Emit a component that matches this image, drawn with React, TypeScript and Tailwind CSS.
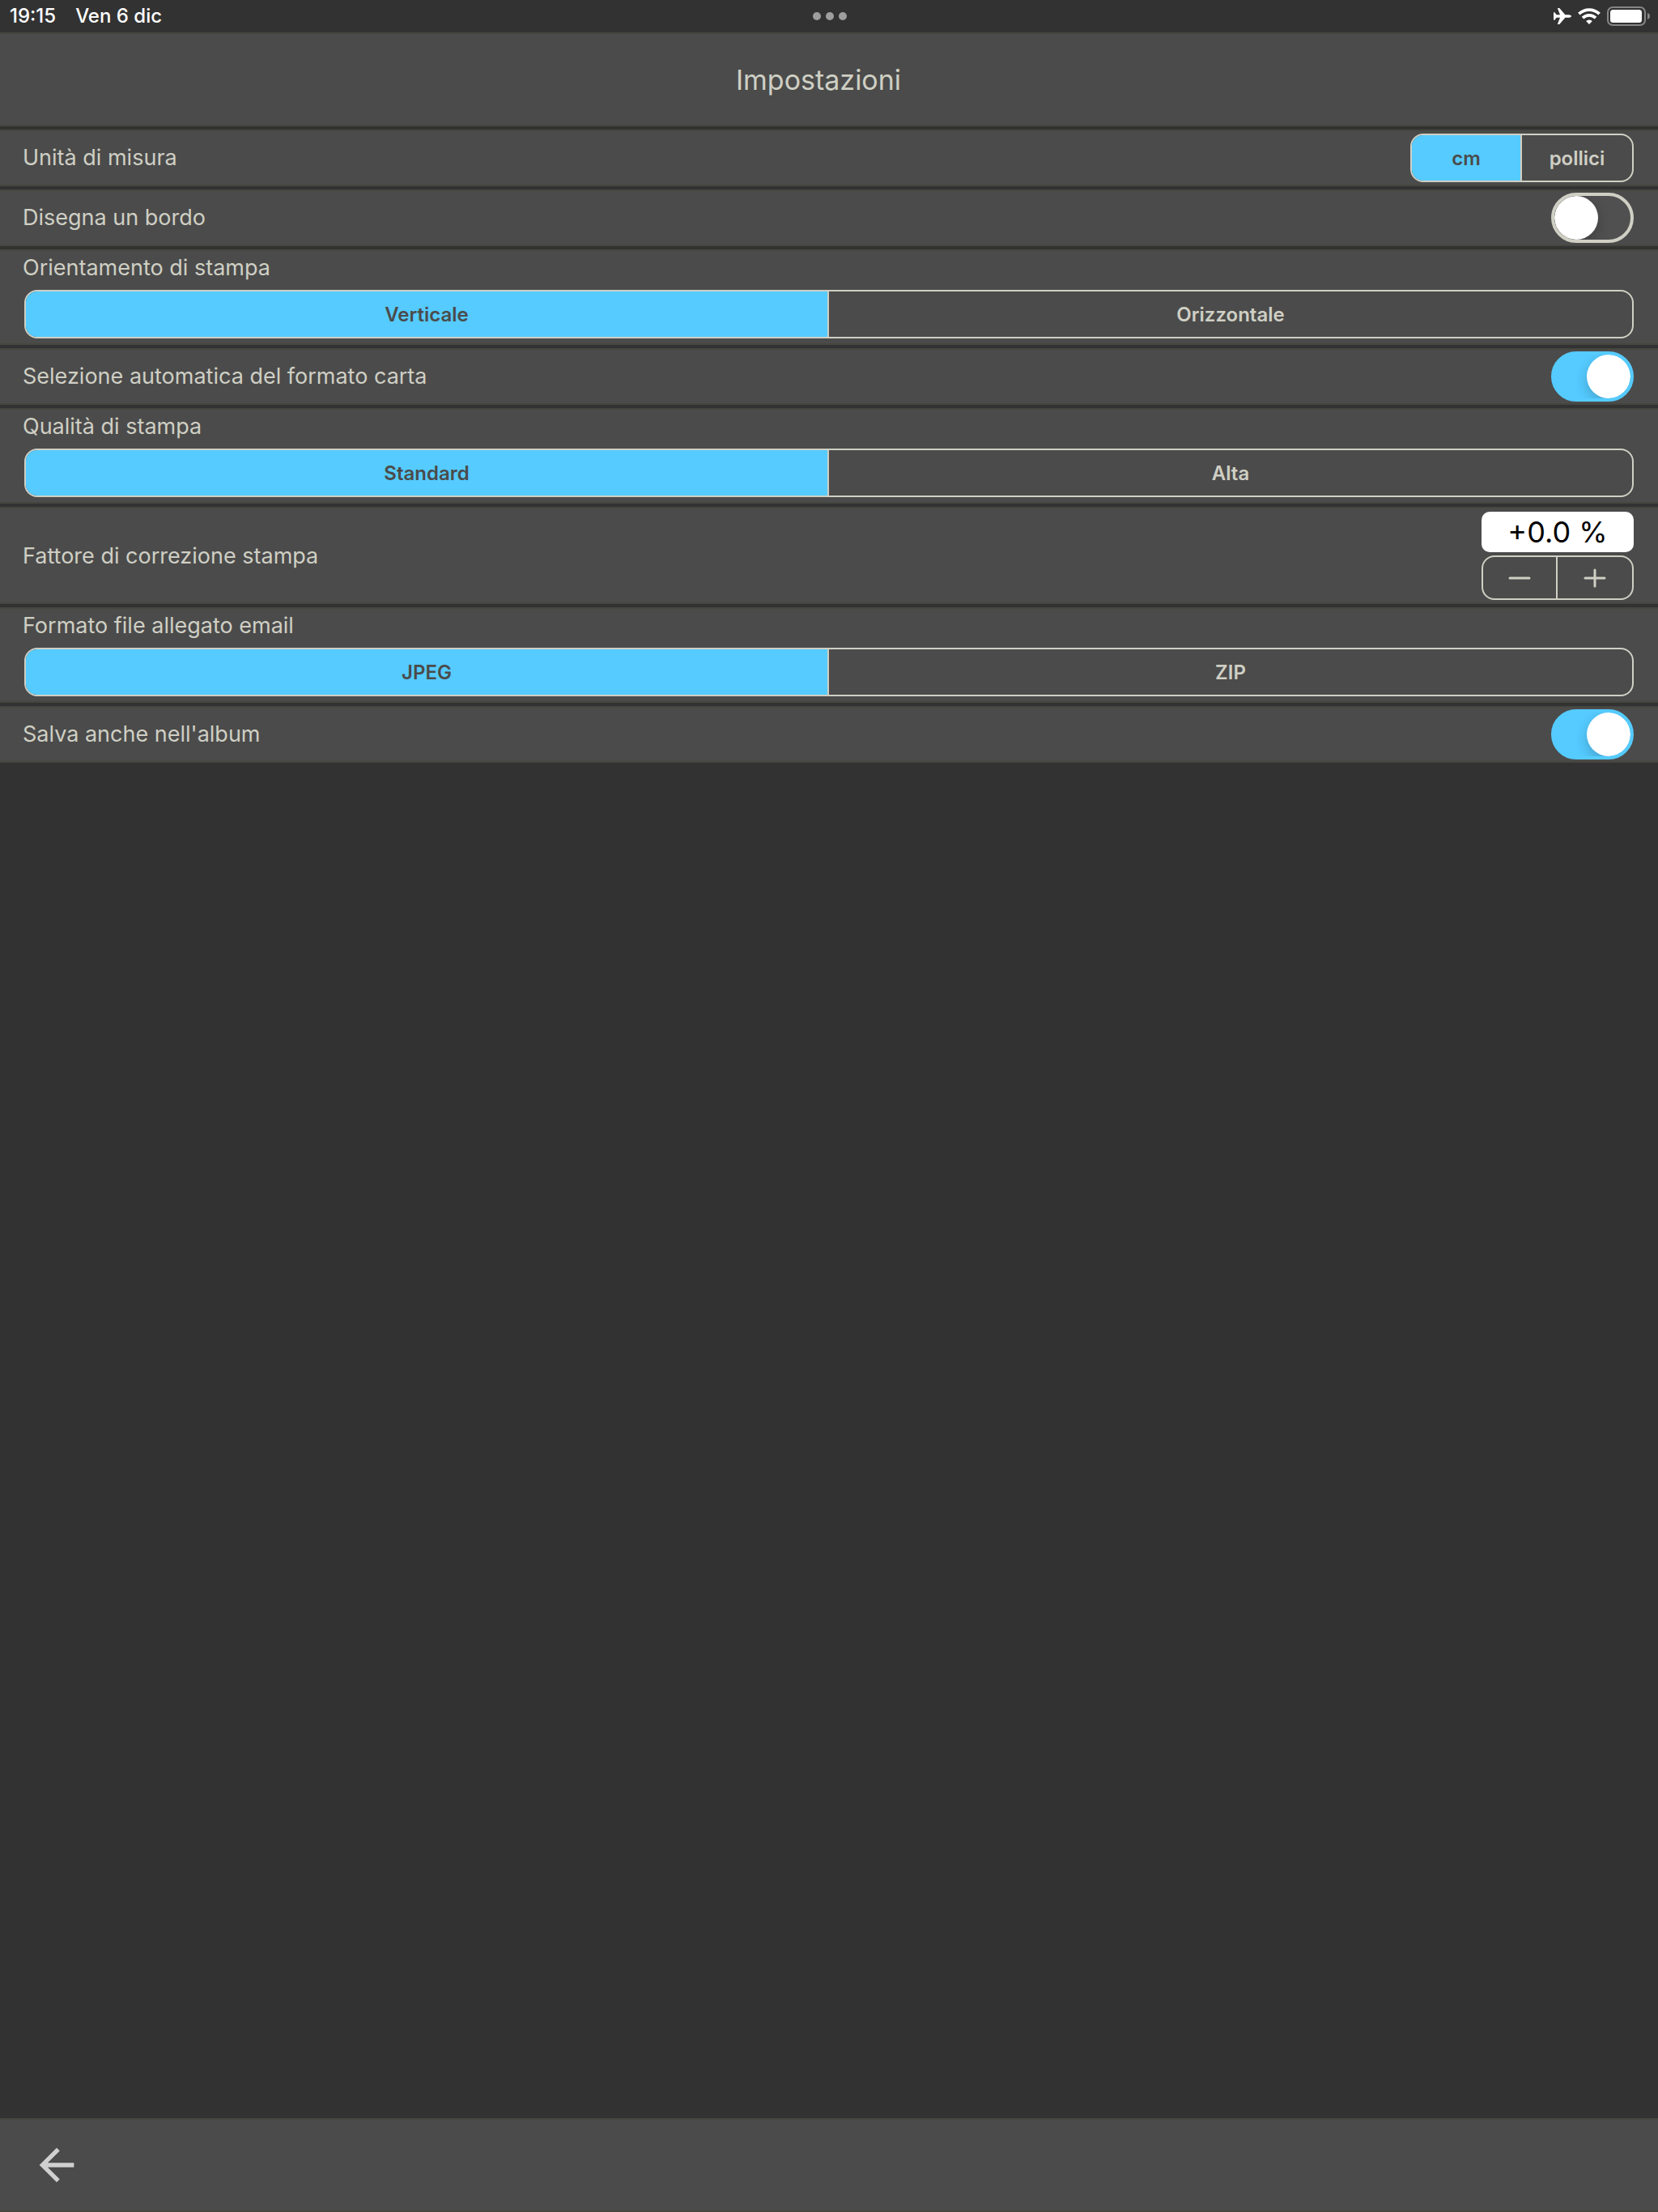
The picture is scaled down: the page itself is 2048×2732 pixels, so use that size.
import { useState } from 'react'
import { MdArrowBack } from 'react-icons/md'

const ROW = 'border-y-2 border-[#464640] bg-[#4b4b4b]'
const LABEL = 'text-[27px] leading-[42px]'

function StatusBar() {
    return (
        <div className="flex h-10 items-center justify-between pl-3 pr-[10px] text-white">
            <div className="flex flex-1 items-center gap-6 text-2xl leading-8 font-medium">
                <span>19:15</span>
                <span>Ven 6 dic</span>
            </div>
            <div className="flex gap-[6px]">
                <span className="size-[10px] rounded-full bg-[#9e9e9e]" />
                <span className="size-[10px] rounded-full bg-[#9e9e9e]" />
                <span className="size-[10px] rounded-full bg-[#9e9e9e]" />
            </div>
            <div className="flex flex-1 items-center justify-end gap-2">
                <svg width="22" height="20" viewBox="0 0 22 20" fill="currentColor">
                    <path d="M22 10c0-1.1-1.8-1.8-3.4-1.8h-4.2L7.7.5C7.4.1 7 0 6.6 0H5.4c-.3 0-.5.3-.4.6l3 7.6H3.6L1.8 5.7C1.6 5.4 1.4 5.3 1 5.3H.5c-.3 0-.5.2-.5.5v8.4c0 .3.2.5.5.5H1c.4 0 .6-.1.8-.4l1.8-2.5H8l-3 7.6c-.1.3.1.6.4.6h1.2c.4 0 .8-.1 1.1-.5l6.7-7.7h4.2c1.6 0 3.4-.7 3.4-1.8z" />
                </svg>
                <svg width="28" height="20" viewBox="0 0 28 20" fill="none" stroke="currentColor" strokeWidth="3.8">
                    <path d="M1.4 7.2a18 18 0 0 1 25.2 0" />
                    <path d="M6 12.1a11.4 11.4 0 0 1 16 0" />
                    <path d="M14 20l-3.9-3.9a5.6 5.6 0 0 1 7.8 0z" fill="currentColor" stroke="none" />
                </svg>
                <svg width="53" height="24" viewBox="0 0 53 24">
                    <rect x="1" y="1" width="46" height="22" rx="6" fill="none" stroke="#858585" strokeWidth="2" />
                    <rect x="4" y="4" width="39" height="16" rx="3.5" fill="#fff" />
                    <path d="M50 8c2 .6 3 2.2 3 4s-1 3.4-3 4z" fill="#858585" />
                </svg>
            </div>
        </div>
    )
}

interface SegmentedProps {
    name: string
    label: string
    options: string[]
    className?: string
}

function Segmented({ name, label, options, className = '' }: SegmentedProps) {
    const [selected, setSelected] = useState(options[0])

    return (
        <div
            role="radiogroup"
            aria-label={label}
            className={`grid h-[60px] grid-cols-2 divide-x-2 divide-[#cfcfc4] overflow-hidden rounded-2xl border-2 border-[#cfcfc4] ${className}`}
        >
            {options.map(option => (
                <label
                    key={option}
                    className="relative flex cursor-pointer items-center justify-center pt-[2px] text-2xl leading-8 font-semibold text-[#cfcfc4] has-checked:bg-[#55cbff] has-checked:text-[#4b4b4b]"
                >
                    <input
                        type="radio"
                        name={name}
                        value={option}
                        checked={selected === option}
                        onChange={() => setSelected(option)}
                        className="sr-only"
                    />
                    {option}
                </label>
            ))}
        </div>
    )
}

function SegmentedRow(props: SegmentedProps) {
    return (
        <div className={`${ROW} flex flex-col gap-[6px] pb-[6px]`}>
            <p className={`${LABEL} px-7`}>{props.label}</p>
            <Segmented {...props} className="mx-[30px]" />
        </div>
    )
}

function SwitchRow({ id, label, initial }: { id: string; label: string; initial: boolean }) {
    const [on, setOn] = useState(initial)

    return (
        <div className={`${ROW} flex items-center justify-between py-[2px] pl-7 pr-[30px]`}>
            <label htmlFor={id} className={LABEL}>{label}</label>
            <input
                id={id}
                type="checkbox"
                role="switch"
                checked={on}
                onChange={e => setOn(e.target.checked)}
                className="flex h-[62px] w-[102px] cursor-pointer appearance-none items-center overflow-hidden rounded-full border-4 border-[#cfcfc4] bg-[#505050] before:size-[54px] before:rounded-full before:bg-white before:shadow-[0_6px_16px_rgba(0,0,0,0.2)] checked:justify-end checked:border-[#55cbff] checked:bg-[#55cbff]"
            />
        </div>
    )
}

function CorrectionRow() {
    const [factor, setFactor] = useState(0)
    const text = `${factor < 0 ? '-' : '+'}${Math.abs(factor).toFixed(1)} %`

    return (
        <div className={`${ROW} flex items-center justify-between pt-1 pb-[3px] pl-7 pr-[30px]`}>
            <label htmlFor="factor" className={LABEL}>Fattore di correzione stampa</label>
            <div className="flex w-[188px] flex-col gap-1">
                <input
                    id="factor"
                    readOnly
                    value={text}
                    className="h-[50px] w-full rounded-[10px] bg-white text-center text-4xl leading-[50px] text-black"
                />
                <div className="grid h-[55px] grid-cols-2 divide-x-2 divide-[#cfcfc4] rounded-2xl border-2 border-[#cfcfc4]">
                    <button
                        aria-label="Diminuisci"
                        onClick={() => setFactor(factor - 0.1)}
                        className="flex items-center justify-center"
                    >
                        <svg width="28" height="28" viewBox="0 0 28 28" stroke="currentColor" strokeWidth="3" strokeLinecap="round">
                            <path d="M2 14h24" />
                        </svg>
                    </button>
                    <button
                        aria-label="Aumenta"
                        onClick={() => setFactor(factor + 0.1)}
                        className="flex items-center justify-center"
                    >
                        <svg width="28" height="28" viewBox="0 0 28 28" stroke="currentColor" strokeWidth="3" strokeLinecap="round">
                            <path d="M2 14h24M14 4v20" />
                        </svg>
                    </button>
                </div>
            </div>
        </div>
    )
}

export default function App() {
    return (
        <div className="flex min-h-screen flex-col bg-[#323232] font-[Inter,sans-serif] text-[#cfcfc4]">
            <StatusBar />

            {/* Title */}
            <header className={`${ROW} flex h-[116px] items-center justify-center pt-[2px] pr-[26px]`}>
                <h1 className="text-[34px] leading-[48px]">Impostazioni</h1>
            </header>

            {/* Settings */}
            <main className="mt-1 flex flex-1 flex-col gap-1">
                <div className={`${ROW} flex h-[70px] items-center justify-between pl-7 pr-[30px]`}>
                    <p className={LABEL}>Unità di misura</p>
                    <Segmented name="unit" label="Unità di misura" options={['cm', 'pollici']} className="w-[276px]" />
                </div>
                <SwitchRow id="border" label="Disegna un bordo" initial={false} />
                <SegmentedRow name="orientation" label="Orientamento di stampa" options={['Verticale', 'Orizzontale']} />
                <SwitchRow id="auto-paper" label="Selezione automatica del formato carta" initial />
                <SegmentedRow name="quality" label="Qualità di stampa" options={['Standard', 'Alta']} />
                <CorrectionRow />
                <SegmentedRow name="attachment" label="Formato file allegato email" options={['JPEG', 'ZIP']} />
                <SwitchRow id="save-album" label="Salva anche nell'album" initial />
            </main>

            {/* Bottom bar */}
            <footer className={`${ROW} flex h-[116px] items-center pl-[38px]`}>
                <button aria-label="Indietro" className="text-[#d0d0d0]">
                    <MdArrowBack size={64} />
                </button>
            </footer>
        </div>
    )
}
